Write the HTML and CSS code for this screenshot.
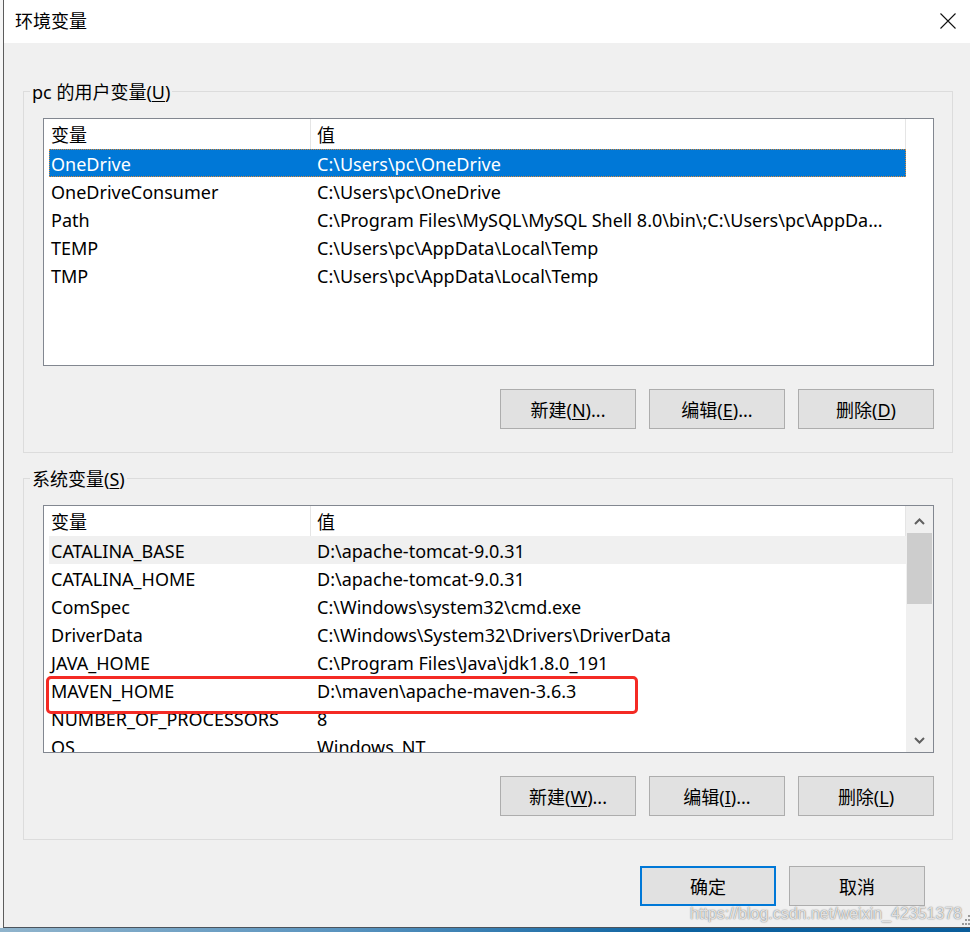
FILE: index.html
```html
<!DOCTYPE html>
<html lang="zh-CN">
<head>
<meta charset="utf-8">
<title>环境变量</title>
<link rel="stylesheet" href="styles.css">
</head>
<body>
<div class="screen">
  <div class="desk">
    <div class="sliver"></div>
    <div class="dialog">
      <div class="titlebar">
        <span class="title">环境变量</span>
        <svg class="close" width="16" height="16" viewBox="0 0 16 16"><path d="M0.5 0.5 L15.5 15.5 M15.5 0.5 L0.5 15.5" stroke="#111" stroke-width="1.1" fill="none"/></svg>
      </div>
      <div class="body">
        <section class="group">
          <div class="legend"><span>pc 的用户变量(<u>U</u>)</span></div>
          <div class="list">
            <div class="rows">
              <div class="row head"><span>变量</span><span>值</span></div>
              <div class="row selected"><span>OneDrive</span><span>C:\Users\pc\OneDrive</span></div>
              <div class="row"><span>OneDriveConsumer</span><span>C:\Users\pc\OneDrive</span></div>
              <div class="row"><span>Path</span><span>C:\Program Files\MySQL\MySQL Shell 8.0\bin\;C:\Users\pc\AppDa...</span></div>
              <div class="row"><span>TEMP</span><span>C:\Users\pc\AppData\Local\Temp</span></div>
              <div class="row"><span>TMP</span><span>C:\Users\pc\AppData\Local\Temp</span></div>
            </div>
          </div>
          <div class="buttons">
            <button class="btn">新建(<u>N</u>)...</button>
            <button class="btn">编辑(<u>E</u>)...</button>
            <button class="btn">删除(<u>D</u>)</button>
          </div>
        </section>
        <section class="group">
          <div class="legend"><span>系统变量(<u>S</u>)</span></div>
          <div class="list">
            <div class="rows">
              <div class="row head"><span>变量</span><span>值</span></div>
              <div class="row hover"><span>CATALINA_BASE</span><span>D:\apache-tomcat-9.0.31</span></div>
              <div class="row"><span>CATALINA_HOME</span><span>D:\apache-tomcat-9.0.31</span></div>
              <div class="row"><span>ComSpec</span><span>C:\Windows\system32\cmd.exe</span></div>
              <div class="row"><span>DriverData</span><span>C:\Windows\System32\Drivers\DriverData</span></div>
              <div class="row"><span>JAVA_HOME</span><span>C:\Program Files\Java\jdk1.8.0_191</span></div>
              <div class="row"><span>MAVEN_HOME</span><span>D:\maven\apache-maven-3.6.3</span></div>
              <div class="row"><span>NUMBER_OF_PROCESSORS</span><span>8</span></div>
              <div class="row"><span>OS</span><span>Windows_NT</span></div>
            </div>
            <div class="scroll">
              <div class="sbtn up"><svg width="11" height="7" viewBox="0 0 11 7"><path d="M1 6 L5.5 1.5 L10 6" stroke="#606060" stroke-width="2" fill="none"/></svg></div>
              <div class="thumb"></div>
              <div class="track"></div>
              <div class="sbtn down"><svg width="11" height="7" viewBox="0 0 11 7"><path d="M1 1 L5.5 5.5 L10 1" stroke="#606060" stroke-width="2" fill="none"/></svg></div>
            </div>
            <div class="mark"></div>
          </div>
          <div class="buttons">
            <button class="btn">新建(<u>W</u>)...</button>
            <button class="btn">编辑(<u>I</u>)...</button>
            <button class="btn">删除(<u>L</u>)</button>
          </div>
        </section>
        <div class="footer">
          <button class="btn default">确定</button>
          <button class="btn">取消</button>
        </div>
      </div>
    </div>
  </div>
  <div class="taskbar"></div>
  <div class="watermark">https://blog.csdn.net/weixin_42351378</div>
  <svg class="grip" width="9" height="10" viewBox="0 0 9 10">
    <rect x="7" y="0" width="2" height="2" fill="#9a9a9a"/>
    <rect x="4" y="4" width="2" height="2" fill="#9a9a9a"/>
    <rect x="7" y="4" width="2" height="2" fill="#9a9a9a"/>
    <rect x="1" y="8" width="2" height="2" fill="#9a9a9a"/>
    <rect x="4" y="8" width="2" height="2" fill="#9a9a9a"/>
    <rect x="7" y="8" width="2" height="2" fill="#9a9a9a"/>
  </svg>
</div>
</body>
</html>
```

FILE: styles.css
```css
* { box-sizing: border-box; }
html, body { margin: 0; padding: 0; }
body {
  width: 970px;
  height: 932px;
  overflow: hidden;
  font-family: "Noto Sans", "Noto Sans CJK SC", sans-serif;
  font-size: 18px;
  color: #000;
  background: #f0f0f0;
}
.screen {
  position: relative;
  width: 970px;
  height: 932px;
  display: flex;
  flex-direction: column;
}
.desk { display: flex; height: 928px; }
.sliver { width: 3px; background: #f6f6f6; }
.dialog {
  flex: 1;
  display: flex;
  flex-direction: column;
  background: #f0f0f0;
  border-left: 1px solid #5c5c5c;
  border-bottom: 1px solid #4c545c;
}
.titlebar {
  height: 43px;
  flex: none;
  background: #fff;
  display: flex;
  align-items: center;
  justify-content: space-between;
  padding: 0 14px 2px 11px;
}
.title { line-height: 24px; }
.body { flex: 1; padding: 48px 17px 0 19px; }
.group {
  border: 1px solid #dcdcdc;
  padding: 0 18px 23px 19px;
}
.group + .group { margin-top: 25px; }
.legend {
  height: 26px;
  line-height: 26px;
  margin-top: -13px;
  margin-left: -13px;
}
.legend span { background: #f0f0f0; padding: 0 2px; }
u { text-underline-offset: 2px; text-decoration-thickness: 1px; }
.list {
  position: relative;
  margin-top: 13px;
  height: 248px;
  border: 1px solid #828790;
  background: #fff;
  display: flex;
  overflow: hidden;
}
.rows { margin-left: 5px; width: 857px; flex: none; }
.row {
  display: grid;
  grid-template-columns: 261px 596px;
  height: 28px;
  line-height: 30px;
  white-space: nowrap;
}
.row span { overflow: hidden; }
.row span:first-child { padding-left: 2px; }
.row span:last-child { padding-left: 7px; }
.row.head { height: 30px; line-height: 32px; }
.row.head span:last-child {
  border-left: 1px solid #e5e5e5;
  border-right: 1px solid #e5e5e5;
  padding-left: 6px;
}
.row.selected {
  background: #0078d7;
  color: #fff;
  outline: 1px dotted #d98a3a;
  outline-offset: -1px;
}
.row.hover { background: #f0f0f0; }
.scroll {
  width: 27px;
  flex: none;
  background: #f0f0f0;
  display: flex;
  flex-direction: column;
}
.sbtn {
  height: 27px;
  display: flex;
  justify-content: center;
  align-items: center;
}
.sbtn.up { padding-top: 4px; }
.sbtn.down { padding-top: 3px; }
.sbtn svg { display: block; }
.thumb { height: 71px; background: #cdcdcd; margin: 0 1px; }
.track { flex: 1; }
.mark {
  position: absolute;
  left: 2px;
  top: 170px;
  width: 592px;
  height: 38px;
  border: 3px solid #f42a24;
  border-radius: 5px;
}
.buttons {
  display: flex;
  justify-content: flex-end;
  gap: 13px;
  margin-top: 23px;
}
.btn {
  width: 136px;
  height: 40px;
  padding: 2px 0 0;
  margin: 0;
  background: #e1e1e1;
  border: 1px solid #adadad;
  font: inherit;
  color: #000;
  display: flex;
  align-items: center;
  justify-content: center;
  line-height: 24px;
}
.btn.default { border: 2px solid #0078d7; }
.footer {
  display: flex;
  justify-content: flex-end;
  gap: 13px;
  margin-top: 26px;
  padding-right: 28px;
}
.taskbar {
  height: 4px;
  background: linear-gradient(90deg, #90b4cc 0%, #5a94bf 35%, #0c62a0 70%, #0a5d9a 100%);
}
.watermark {
  position: absolute;
  left: 690px;
  top: 904px;
  font-family: "Liberation Sans", Arial, sans-serif;
  font-size: 16px;
  line-height: 20px;
  color: rgba(255, 255, 255, 0.8);
  text-shadow: 0 0 1px rgba(0, 0, 0, 0.5), 0 0 2px rgba(0, 0, 0, 0.25);
  white-space: nowrap;
}
.grip { position: absolute; left: 961px; top: 915px; }
```
